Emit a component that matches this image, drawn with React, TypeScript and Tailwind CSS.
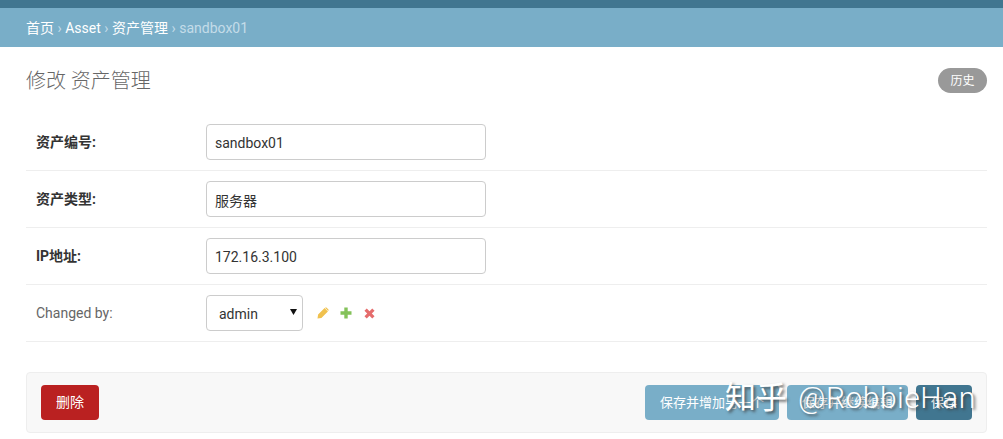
const font = { fontFamily: '"Roboto", "Noto Sans CJK SC", sans-serif' };

function FieldRow({ label, value, bold = true }: { label: string; value: string; bold?: boolean }) {
  return (
    <div className="flex h-[57px] items-center border-b border-[#eeeeee] pl-[10px]">
      <label className={`w-[170px] pt-[1px] text-[14px] ${bold ? "font-bold text-[#333333]" : "text-[#666666]"}`}>{label}</label>
      <input
        readOnly
        value={value}
        className="h-[36px] w-[280px] rounded border border-[#cccccc] bg-white px-[8px] pt-[1px] text-[14px] text-[#333333] outline-none"
        style={font}
      />
    </div>
  );
}

export default function App() {
  return (
    <div className="relative h-[439px] w-[1003px] overflow-hidden bg-white" style={font}>
      <div className="h-[8px] bg-[#417690]" />
      <div className="flex h-[39px] items-center gap-[3.5px] bg-[#79aec8] px-[26px] pt-[2px] text-[14px] text-white">
        <span>首页</span>
        <span className="text-[#c4dce8]">›</span>
        <span>Asset</span>
        <span className="text-[#c4dce8]">›</span>
        <span>资产管理</span>
        <span className="text-[#c4dce8]">›</span>
        <span className="text-[#c4dce8]">sandbox01</span>
      </div>

      <div className="pl-[26px] pr-[16px]">
        <div className="flex h-[67px] items-center justify-between">
          <h1 className="text-[20px] font-light text-[#666666]">修改 资产管理</h1>
          <a className="flex h-[25px] w-[49px] items-center justify-center rounded-full bg-[#999999] text-[12px] text-white">历史</a>
        </div>

        <div>
          <FieldRow label="资产编号:" value="sandbox01" />
          <FieldRow label="资产类型:" value="服务器" />
          <FieldRow label="IP地址:" value="172.16.3.100" />
          <div className="flex h-[57px] items-center border-b border-[#eeeeee] pl-[10px]">
            <label className="w-[170px] text-[14px] text-[#666666]">Changed by:</label>
            <div className="relative">
              <select
                className="block h-[36px] w-[97px] appearance-none rounded border border-[#cccccc] bg-white pl-[12px] pt-[2px] text-[14px] text-[#333333] outline-none"
                style={font}
              >
                <option>admin</option>
              </select>
              <svg width="7" height="6" viewBox="0 0 7 6" className="absolute right-[6px] top-[14px]">
                <path d="M0 0h7L3.5 6z" fill="#111111" />
              </svg>
            </div>
            <div className="ml-[14px] flex items-center">
              <svg width="12" height="12" viewBox="0 0 12 12">
                <path d="M0.5 11.5l0.6-3.9L7.6 1.1l3.3 3.3-6.5 6.5zM8.4 0.5h1l2.1 2.1v1l-0.3 0.3-3.1-3.1z" fill="#f0c14e" />
              </svg>
              <svg width="12" height="12" viewBox="0 0 12 12" className="ml-[11px]">
                <path d="M4.3 0.5h3.4v3.8h3.8v3.4h-3.8v3.8h-3.4v-3.8h-3.8v-3.4h3.8z" fill="#84c25a" />
              </svg>
              <svg width="11" height="11" viewBox="0 0 12 12" className="ml-[12px]">
                <path d="M0.5 3l2.5-2.5 3 3 3-3 2.5 2.5-3 3 3 3-2.5 2.5-3-3-3 3-2.5-2.5 3-3z" fill="#e56c6c" />
              </svg>
            </div>
          </div>
        </div>

        <div className="mt-[30px] flex h-[61px] items-center justify-between rounded border border-[#eeeeee] bg-[#f8f8f8] px-[14px]">
          <a className="flex h-[35px] w-[58px] items-center justify-center rounded bg-[#ba2121] text-[14px] text-white">删除</a>
          <div className="flex gap-[8px]">
            <a className="flex h-[35px] w-[134px] items-center justify-center rounded bg-[#79aec8] text-[13px] text-white">保存并增加另一个</a>
            <a className="flex h-[35px] w-[121px] items-center justify-center rounded bg-[#79aec8] text-[13px] text-white">保存并继续编辑</a>
            <a className="flex h-[35px] w-[56px] items-center justify-center rounded bg-[#417690] text-[13px] text-white">保存</a>
          </div>
        </div>
      </div>

      <div className="absolute left-[725px] top-[378px] flex items-baseline gap-[11px] whitespace-nowrap leading-[40px] text-white [text-shadow:2px_2px_3px_rgba(60,60,60,0.8)]">
        <span className="text-[31px]">知乎</span>
        <span className="text-[30px] font-light tracking-[0.5px]">@RobbieHan</span>
      </div>
    </div>
  );
}
